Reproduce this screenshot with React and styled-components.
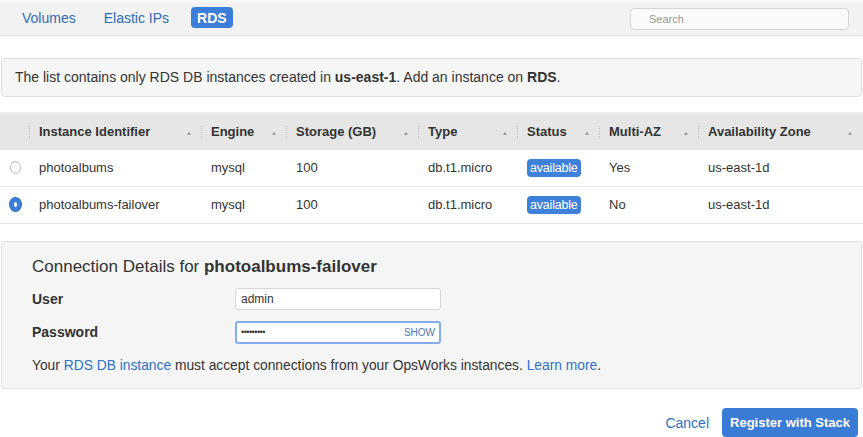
import React from 'react';
import styled, { createGlobalStyle } from 'styled-components';

const Global = createGlobalStyle`
  html, body { margin: 0; padding: 0; background: #fff; }
  body {
    font-family: "Liberation Sans", Arial, sans-serif;
    color: #333;
    width: 863px;
    overflow: hidden;
  }
`;

const columns = [
  { key: 'id', label: 'Instance Identifier' },
  { key: 'engine', label: 'Engine' },
  { key: 'storage', label: 'Storage (GB)' },
  { key: 'type', label: 'Type' },
  { key: 'status', label: 'Status' },
  { key: 'multi', label: 'Multi-AZ' },
  { key: 'zone', label: 'Availability Zone' },
];

const instances = [
  { id: 'photoalbums', engine: 'mysql', storage: '100', type: 'db.t1.micro', status: 'available', multi: 'Yes', zone: 'us-east-1d' },
  { id: 'photoalbums-failover', engine: 'mysql', storage: '100', type: 'db.t1.micro', status: 'available', multi: 'No', zone: 'us-east-1d' },
];

export default class App extends React.Component {

  constructor(props) {
    super(props);
    this.state = { selected: 'photoalbums-failover' };
  }

  render() {
    const { selected } = this.state;
    return (
      <Page>
        <Global />
        <TabBar>
          <Tabs>
            <Tab>Volumes</Tab>
            <Tab>Elastic IPs</Tab>
            <Tab active>RDS</Tab>
          </Tabs>
          <Search placeholder="Search" />
        </TabBar>

        <Notice>
          The list contains only RDS DB instances created in&nbsp;<b>us-east-1</b>. Add an instance on&nbsp;<b>RDS</b>.
        </Notice>

        <Table>
          <HeadRow>
            <HeadCell />
            {columns.map(c => (
              <HeadCell key={c.key}>
                <span>{c.label}</span>
                <SortArrow>▲</SortArrow>
              </HeadCell>
            ))}
          </HeadRow>
          {instances.map(row => (
            <Row key={row.id} onClick={() => this.setState({ selected: row.id })}>
              <Cell><Radio checked={selected === row.id} /></Cell>
              <Cell>{row.id}</Cell>
              <Cell>{row.engine}</Cell>
              <Cell>{row.storage}</Cell>
              <Cell>{row.type}</Cell>
              <Cell><Badge>{row.status}</Badge></Cell>
              <Cell>{row.multi}</Cell>
              <Cell>{row.zone}</Cell>
            </Row>
          ))}
        </Table>

        <Details>
          <Title>Connection Details for <b>{selected}</b></Title>
          <Field>
            <Label>User</Label>
            <Input defaultValue="admin" />
          </Field>
          <Field>
            <Label>Password</Label>
            <PasswordBox>
              <Dots>•••••••••</Dots>
              <Show>SHOW</Show>
            </PasswordBox>
          </Field>
          <Help>
            Your <Link>RDS DB instance</Link> must accept connections from your OpsWorks instances. <Link>Learn more</Link>.
          </Help>
        </Details>

        <Footer>
          <Cancel>Cancel</Cancel>
          <Primary>Register with Stack</Primary>
        </Footer>
      </Page>
    );
  }
}

const Page = styled.div`
  width: 863px;
  height: 437px;
  display: flex;
  flex-direction: column;
`;

const TabBar = styled.div`
  height: 33px;
  display: flex;
  align-items: center;
  justify-content: space-between;
  background: #f2f2f2;
  border-top: 2px solid #fafafa;
  border-bottom: 1px solid #dcdcdc;
  padding: 0 14px 0 16px;
`;

const Tabs = styled.div`
  display: flex;
  align-items: center;
  gap: 16px;
  margin-top: -1px;
`;

const Tab = styled.div`
  font-size: 14px;
  line-height: 16px;
  color: ${p => (p.active ? '#fff' : '#2f6cb6')};
  background: ${p => (p.active ? '#3b7ed9' : 'transparent')};
  font-weight: ${p => (p.active ? 'bold' : 'normal')};
  border-radius: 4px;
  padding: 3px 6px 2px;
`;

const Search = styled.input`
  width: 219px;
  height: 22px;
  box-sizing: border-box;
  border: 1px solid #d4d4d4;
  border-radius: 4px;
  background: #fafafa;
  font-family: inherit;
  font-size: 11px;
  padding: 0 0 0 18px;
  margin-top: 1px;
  &::placeholder { color: #999; }
`;

const Notice = styled.div`
  margin: 22px 1px 0 1px;
  height: 39px;
  box-sizing: border-box;
  display: flex;
  align-items: center;
  padding: 0 13px;
  font-size: 14px;
  color: #333;
  background: #f6f6f6;
  border: 1px solid #dedede;
  border-radius: 4px;
  white-space: pre;
`;

const grid = `30px 172px 85px 132px 99px 82px 99px 1fr`;

const Table = styled.div`
  margin-top: 15px;
  border-top: 2px solid #efefef;
`;

const HeadRow = styled.div`
  display: grid;
  grid-template-columns: ${grid};
  height: 36px;
  background: #e6e6e6;
`;

const HeadCell = styled.div`
  position: relative;
  display: flex;
  align-items: center;
  justify-content: space-between;
  padding: 0 10px 0 9px;
  font-size: 13px;
  font-weight: bold;
  color: #333;
  &::after {
    content: '';
    position: absolute;
    right: 0;
    top: 12px;
    height: 13px;
    border-right: 1px dotted #c4c4c4;
  }
  &:last-child::after { display: none; }
`;

const SortArrow = styled.span`
  font-size: 6px;
  color: #999;
  margin-top: 2px;
`;

const Row = styled.div`
  display: grid;
  grid-template-columns: ${grid};
  height: 36px;
  border-bottom: 1px solid #e6e6e6;
  cursor: pointer;
`;

const Cell = styled.div`
  display: flex;
  align-items: center;
  padding: 0 9px;
  font-size: 13px;
  color: #333;
  white-space: nowrap;
`;

const Radio = styled.span`
  width: 13px;
  height: 13px;
  box-sizing: border-box;
  border-radius: 50%;
  margin-left: 1px;
  border: ${p => (p.checked ? '4px solid #3a7ed8' : '1px solid #c2c2c2')};
  background: ${p => (p.checked ? '#fff' : '#fdfdfd')};
  box-shadow: ${p => (p.checked ? '0 0 0 1px #2f6fcc' : 'none')};
`;

const Badge = styled.span`
  background: #3f80da;
  color: #fff;
  font-size: 12.5px;
  line-height: 18px;
  padding: 0 3px;
  border-radius: 4px;
  letter-spacing: -0.2px;
`;

const Details = styled.div`
  margin: 17px 1px 0 1px;
  height: 149px;
  box-sizing: border-box;
  background: #f5f5f5;
  border: 1px solid #e0e0e0;
  border-radius: 4px;
  padding: 14px 30px 0 30px;
`;

const Title = styled.div`
  font-size: 17px;
  color: #333;
  line-height: 22px;
  margin-bottom: 10px;
`;

const Field = styled.div`
  display: grid;
  grid-template-columns: 203px 206px;
  align-items: center;
  margin-bottom: 11px;
`;

const Label = styled.div`
  font-size: 14px;
  font-weight: bold;
  color: #333;
`;

const Input = styled.input`
  height: 22px;
  box-sizing: border-box;
  border: 1px solid #d6d6d6;
  border-radius: 3px;
  background: #fff;
  padding: 0 5px;
  font-family: inherit;
  font-size: 12px;
  color: #333;
`;

const PasswordBox = styled.div`
  height: 23px;
  box-sizing: border-box;
  display: flex;
  align-items: center;
  justify-content: space-between;
  border: 2px solid #82aef0;
  border-radius: 3px;
  background: #fff;
  padding: 0 4px;
`;

const Dots = styled.span`
  font-size: 9px;
  letter-spacing: -0.5px;
  color: #333;
`;

const Show = styled.span`
  font-size: 10px;
  color: #4a76b4;
`;

const Help = styled.div`
  font-size: 13.8px;
  color: #333;
  margin-top: 14px;
`;

const Link = styled.a`
  color: #2d72c9;
  text-decoration: none;
`;

const Footer = styled.div`
  display: flex;
  align-items: center;
  justify-content: flex-end;
  gap: 13px;
  margin-top: 19px;
  padding-right: 5px;
`;

const Cancel = styled.button`
  border: none;
  background: none;
  font-family: inherit;
  font-size: 14px;
  color: #2d6fc4;
  padding: 0;
  cursor: pointer;
`;

const Primary = styled.button`
  height: 29px;
  width: 136px;
  border: none;
  border-radius: 4px;
  background: #3a7bd5;
  color: #fff;
  font-family: inherit;
  font-size: 13px;
  font-weight: bold;
  padding: 0;
  cursor: pointer;
`;
